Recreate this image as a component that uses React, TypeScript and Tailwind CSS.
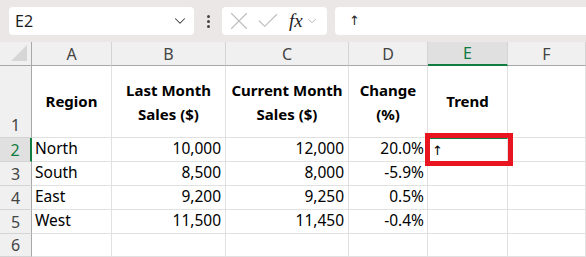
import { ChevronDown, X, Check } from "lucide-react";

const COLS = ["A", "B", "C", "D", "E", "F"];
const WIDTHS = [80, 114, 123, 79, 80, 78];

const ROWS: { region: string; last: string; cur: string; change: string; trend: string }[] = [
  { region: "North", last: "10,000", cur: "12,000", change: "20.0%", trend: "↑" },
  { region: "South", last: "8,500", cur: "8,000", change: "-5.9%", trend: "" },
  { region: "East", last: "9,200", cur: "9,250", change: "0.5%", trend: "" },
  { region: "West", last: "11,500", cur: "11,450", change: "-0.4%", trend: "" },
];

const font = { fontFamily: '"Noto Sans", "Open Sans", sans-serif' };
const arrowFont = { fontFamily: '"DejaVu Sans", sans-serif' };

function Toolbar() {
  return (
    <div className="h-[42px] bg-[#ebe7e7] flex items-center pl-[9px]">
      <div className="w-[185px] h-[28px] bg-white rounded-[4px] flex items-center justify-between pl-[6px] pr-[5px]">
        <span className="text-[16px] text-[#1f1f1f]">E2</span>
        <ChevronDown size={18} strokeWidth={1.4} className="text-[#3a3a3a]" />
      </div>
      <div className="w-[28px] flex flex-col items-center gap-[2px]">
        <span className="w-[3px] h-[3px] bg-[#444] rounded-full" />
        <span className="w-[3px] h-[3px] bg-[#444] rounded-full" />
        <span className="w-[3px] h-[3px] bg-[#444] rounded-full" />
      </div>
      <div className="w-[105px] h-[28px] bg-white rounded-[4px] flex items-center pl-[2px]">
        <X size={30} strokeWidth={0.9} className="text-[#bdbdbd]" />
        <Check size={26} strokeWidth={1} className="text-[#bdbdbd] ml-[1px]" />
        <span className="flex items-center ml-[8px]">
          <span className="italic text-[19px] text-[#222]" style={{ fontFamily: '"Liberation Serif", serif' }}>
            fx
          </span>
          <ChevronDown size={14} strokeWidth={1.2} className="text-[#999] ml-[2px]" />
        </span>
      </div>
      <div className="ml-[8px] flex-1 h-[28px] bg-white rounded-l-[4px] flex items-center pl-[14px]">
        <span className="text-[13px] text-[#1f1f1f]" style={arrowFont}>
          ↑
        </span>
      </div>
    </div>
  );
}

export default function App() {
  const cell = "border-r border-b border-[#e1e1e1] h-full";
  const rowHead = (n: number, active = false, tall = false) => (
    <div
      className={`h-full border-b border-[#d4d4d4] flex justify-center text-[16px] ${
        tall ? "items-end" : "items-center"
      } ${
        active
          ? "bg-[#e0e0e0] text-[#107c41] border-r-2 border-r-[#107c41]"
          : "bg-[#f0f0f0] text-[#444] border-r border-r-[#a8a8a8]"
      }`}
    >
      {n}
    </div>
  );

  return (
    <div className="w-[586px] h-[257px] overflow-hidden bg-white relative" style={font}>
      <Toolbar />
      <div
        className="grid"
        style={{
          gridTemplateColumns: `32px ${WIDTHS.map((w) => `${w}px`).join(" ")}`,
          gridTemplateRows: "24px 72px 24px 24px 24px 24px 23px",
        }}
      >
        {/* column headers */}
        <div className="bg-[#f0f0f0] border-r border-b border-[#a8a8a8] relative">
          <div className="absolute right-[4px] bottom-[4px] w-0 h-0 border-l-[16px] border-l-transparent border-b-[16px] border-b-[#d6d6d6]" />
        </div>
        {COLS.map((c) => (
          <div
            key={c}
            className={`flex items-center justify-center text-[16px] border-r border-r-[#d4d4d4] ${
              c === "E"
                ? "bg-[#e0e0e0] text-[#107c41] border-b-2 border-b-[#107c41]"
                : "bg-[#f0f0f0] text-[#444] border-b border-b-[#a8a8a8]"
            }`}
          >
            {c}
          </div>
        ))}

        {/* row 1: headers */}
        {rowHead(1, false, true)}
        <div className={`${cell} flex items-center justify-center font-bold text-[15px] text-black`}>Region</div>
        <div className={`${cell} flex items-center justify-center text-center font-bold text-[15px] leading-[24px] text-black`}>
          Last Month
          <br />
          Sales ($)
        </div>
        <div className={`${cell} flex items-center justify-center text-center font-bold text-[15px] leading-[24px] text-black`}>
          Current Month
          <br />
          Sales ($)
        </div>
        <div className={`${cell} flex items-center justify-center text-center font-bold text-[15px] leading-[24px] text-black`}>
          Change
          <br />
          (%)
        </div>
        <div className={`${cell} flex items-center justify-center font-bold text-[15px] text-black`}>Trend</div>
        <div className={cell} />

        {/* data rows */}
        {ROWS.map((r, i) => (
          <div key={r.region} className="contents">
            {rowHead(i + 2, i === 0)}
            <div className={`${cell} flex items-end pl-[3px] pb-[1px] text-[15.5px] text-black`}>{r.region}</div>
            <div className={`${cell} flex items-end justify-end pr-[4px] pb-[1px] text-[15.5px] text-black`}>{r.last}</div>
            <div className={`${cell} flex items-end justify-end pr-[4px] pb-[1px] text-[15.5px] text-black`}>{r.cur}</div>
            <div className={`${cell} flex items-end justify-end pr-[3px] pb-[1px] text-[15.5px] text-black`}>{r.change}</div>
            <div
              className={`${cell} flex items-center pl-[4px] pt-[2px] text-[13px] text-black ${
                i === 0 ? "border-t border-t-[#107c41]" : ""
              }`}
              style={arrowFont}
            >
              {r.trend}
            </div>
            <div className={cell} />
          </div>
        ))}

        {/* row 6 */}
        {rowHead(6, false)}
        {COLS.map((c) => (
          <div key={c} className={cell} />
        ))}
      </div>

      {/* annotation box */}
      <div className="absolute left-[425px] top-[133px] w-[88px] h-[33px] border-[5px] border-[#e8141f]" />
    </div>
  );
}
